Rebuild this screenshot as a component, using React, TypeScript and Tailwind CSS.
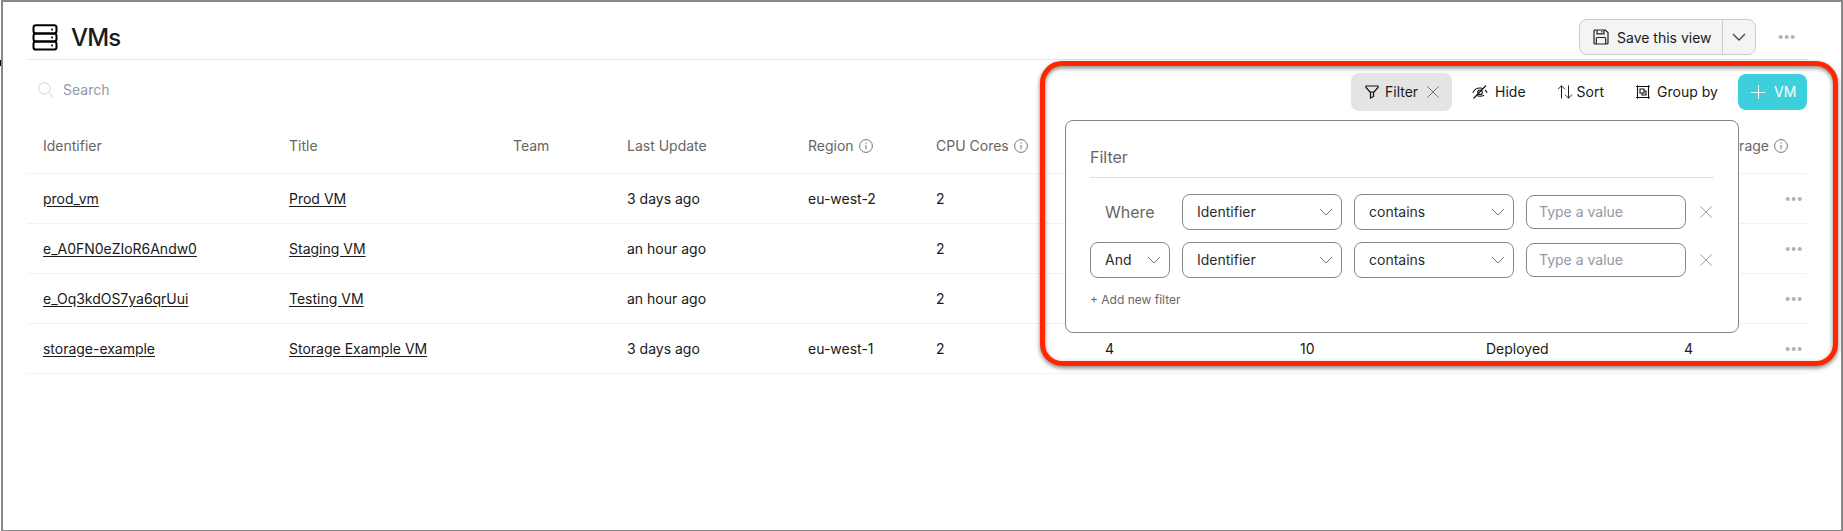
import React from "react";

const font = "font-['Inter',sans-serif]";

const rows = [
  { id: "prod_vm", title: "Prod VM", updated: "3 days ago", region: "eu-west-2", cpu: "2", extra: ["", "", "", ""] },
  { id: "e_A0FN0eZIoR6Andw0", title: "Staging VM", updated: "an hour ago", region: "", cpu: "2", extra: ["", "", "", ""] },
  { id: "e_Oq3kdOS7ya6qrUui", title: "Testing VM", updated: "an hour ago", region: "", cpu: "2", extra: ["", "", "", ""] },
  { id: "storage-example", title: "Storage Example VM", updated: "3 days ago", region: "eu-west-1", cpu: "2", extra: ["4", "10", "Deployed", "4"] },
];

const grid =
  "grid grid-cols-[246px_224px_114px_181px_128px_169px_195px_186px_198px_139px] items-center";

function Dots() {
  return (
    <svg width="18" height="6" viewBox="0 0 18 6" fill="#b3b3b3">
      <circle cx="2.700" cy="3" r="2.100" />
      <circle cx="8.700" cy="3" r="2.100" />
      <circle cx="14.700" cy="3" r="2.100" />
    </svg>
  );
}

function Info() {
  return (
    <svg width="14" height="14" viewBox="0 0 14 14" fill="none" stroke="#777" strokeWidth="1">
      <circle cx="7" cy="7" r="6.4" />
      <path d="M7 6v4.300M7 3.600v1.200" />
    </svg>
  );
}

function Chevron({ color = "#777", w = "1" }: { color?: string; w?: string }) {
  return (
    <svg width="14" height="8" viewBox="0 0 14 8" fill="none" stroke={color} strokeWidth={w}>
      <path d="M1 1l6 6 6-6" />
    </svg>
  );
}

function Cross({ color = "#999" }: { color?: string }) {
  return (
    <svg width="12" height="12" viewBox="0 0 12 12" fill="none" stroke={color} strokeWidth="1">
      <path d="M.4.4l11.2 11.2M11.6.4L.4 11.6" />
    </svg>
  );
}

function Select({ label, width }: { label: string; width: string }) {
  return (
    <div className={`${width} flex h-9 items-center justify-between rounded-lg border border-[#858585] bg-white pl-[14px] pr-2 text-[14px] text-[#2b2b2b]`}>
      {label}
      <Chevron />
    </div>
  );
}

function ValueInput() {
  return (
    <div className="flex h-[34px] w-40 items-center rounded-lg border border-[#858585] bg-white pl-3 text-[14px] text-[#9299a8]">
      Type a value
    </div>
  );
}

export default function App() {
  return (
    <div className={`${font} relative h-[531px] w-[1843px] overflow-hidden bg-white text-[14px] leading-5 text-[#1a1a1a]`}>
      <div className="ml-px h-[531px] border-2 border-b border-[#888] pl-6 pr-[34px]">
        <header className="flex h-[58px] items-center border-b border-[#e4e4e4] pt-4">
          <svg className="-mt-[3px] ml-[5px]" width="26" height="27" viewBox="0 0 26 27" fill="none" stroke="#000" strokeWidth="2">
            <rect x="1.500" y="1.300" width="23" height="8.100" rx="2.400" />
            <rect x="1.500" y="9.400" width="23" height="8.100" rx="2.400" />
            <rect x="1.500" y="17.500" width="23" height="8.100" rx="2.400" />
            <g fill="#000" stroke="none">
              <circle cx="20" cy="5.600" r="1" />
              <circle cx="20" cy="13.600" r="1" />
              <circle cx="20" cy="21.600" r="1" />
            </g>
          </svg>
          <h1 className="-mt-px ml-[13px] text-[24px] font-medium leading-8 tracking-[-0.8px]">VMs</h1>
          <div className="-mt-[3px] ml-auto mr-[11px] flex items-center gap-[22px]">
            <div className="flex h-9 w-[177px] rounded-lg border border-[#ccc] bg-[#f4f4f4]">
              <div className="flex w-[143px] items-center gap-2 border-r border-[#ccc] pl-[13px]">
                <svg width="16" height="16" viewBox="0 0 16 16" fill="none" stroke="#222" strokeWidth="1.200">
                  <path d="M2 1h10.200L15 3.600V14q0 1-1 1H2q-1 0-1-1V2q0-1 1-1z" />
                  <path d="M4 1v3.800h7V1M8.800 2v1.500M3.300 15V9.500q0-1 1-1h7.400q1 0 1 1V15" />
                </svg>
                <span className="pt-px">Save this view</span>
              </div>
              <div className="flex grow items-center justify-center">
                <Chevron color="#444" w="1.3" />
              </div>
            </div>
            <Dots />
          </div>
        </header>

        <div className="flex h-16 items-center">
          <svg className="-mt-1 ml-[11px]" width="16" height="16" viewBox="0 0 16 16" fill="none" stroke="#d4d4d4" strokeWidth="1">
            <circle cx="6.400" cy="6.400" r="5.700" />
            <path d="M10.500 10.500l4.800 4.800" />
          </svg>
          <span className="-mt-1 ml-[9px] text-[#9299a8]">Search</span>
          <div className="ml-auto flex items-center">
            <div className="flex h-[38px] w-[101px] items-center rounded-lg bg-[#e4e4e4] pl-[14px]">
              <svg width="14" height="14" viewBox="0 0 14 14" fill="none" stroke="#111" strokeWidth="1.200">
                <path d="M1 1h12v1.500L8.500 7.500v4L5.500 13V7.500L1 2.500zM5 7h4" />
              </svg>
              <span className="ml-[6px] mr-[9px]">Filter</span>
              <Cross color="#777" />
            </div>
            <svg className="ml-5" width="16" height="14" viewBox="0 0 16 14" fill="none" stroke="#111" strokeWidth="1.100">
              <path d="M.8 7.800Q3 3 8 3q2 0 3.500.8M13 5Q14.500 6.300 15.200 7.800M4.500 10.300Q6 11.300 8 11.300q2.200 0 4-1M1.500 13.500L14 .5" />
              <circle cx="8" cy="7.300" r="2.300" />
            </svg>
            <span className="ml-[7px]">Hide</span>
            <svg className="ml-8" width="15" height="14" viewBox="0 0 15 14" fill="none" stroke="#222" strokeWidth="1">
              <path d="M3.500 13.500V.8M0 4.300L3.500.8 7 4.300M10.500.5v12.700M7 9.700l3.500 3.500L14 9.700" />
            </svg>
            <span className="ml-[4px]">Sort</span>
            <svg className="ml-8" width="14" height="14" viewBox="0 0 14 14" fill="none" stroke="#111" strokeWidth="1.100">
              <path d="M1.500 1.500h11v11h-11zM4 4h4v4H4zM8 6h2v4H6V8" />
              <path d="M.2 1.500h1.300V.2M13.800 1.500h-1.300V.2M.2 12.500h1.300v1.300M13.800 12.500h-1.300v1.300" />
            </svg>
            <span className="ml-[7px] mr-[21px] w-[60px] whitespace-nowrap">Group by</span>
            <div className="flex h-9 w-[69px] items-center gap-[9px] rounded-lg bg-[#3ecfdd] pl-[13px] text-white">
              <svg width="14" height="14" viewBox="0 0 14 14" stroke="white" strokeWidth="1">
                <path d="M7.500 0v14M0 7.500h14" />
              </svg>
              VM
            </div>
          </div>
        </div>

        <div className={`${grid} h-[50px] border-b border-[#f1f1f1] pb-[5px] text-[#666]`}>
          <span className="pl-4">Identifier</span>
          <span className="pl-4">Title</span>
          <span className="pl-4">Team</span>
          <span className="pl-4">Last Update</span>
          <span className="flex items-center gap-[5px] pl-4">Region <Info /></span>
          <span className="flex items-center gap-[5px] pl-4">CPU Cores <Info /></span>
          <span />
          <span />
          <span />
          <span className="flex items-center justify-end gap-[5px] pr-[19px]">Storage <Info /></span>
        </div>
        {rows.map((r) => (
          <div key={r.id} className={`${grid} h-[50px] border-b border-[#f1f1f1]`}>
            <span className="pl-4 tracking-[-0.02px] underline underline-offset-2">{r.id}</span>
            <span className="pl-4 underline underline-offset-2">{r.title}</span>
            <span />
            <span className="pl-4">{r.updated}</span>
            <span className="pl-4">{r.region}</span>
            <span className="pl-4">{r.cpu}</span>
            <span className="pl-4">{r.extra[0]}</span>
            <span className="pl-4">{r.extra[1]}</span>
            <span className="pl-4">{r.extra[2]}</span>
            <span className="flex items-center justify-between pl-4 pr-[4px]">
              <span>{r.extra[3]}</span>
              <Dots />
            </span>
          </div>
        ))}
      </div>

      <div className="absolute left-0 top-[60px] h-[6px] w-px bg-black" />

      <div className="absolute left-[1065px] top-[120px] h-[213px] w-[674px] rounded-lg border border-[#858585] bg-white px-6 pt-6">
        <div className="flex h-[33px] items-start border-b border-[#e0e0e0] text-[16px] leading-6 text-[#666]">Filter</div>
        <div className="mt-4 flex flex-col gap-3">
          <div className="flex h-9 items-center gap-3">
            <span className="w-20 pl-[15px] text-[16px] text-[#666]">Where</span>
            <Select label="Identifier" width="w-40" />
            <Select label="contains" width="w-40" />
            <ValueInput />
            <span className="ml-[2px]"><Cross /></span>
          </div>
          <div className="flex h-9 items-center gap-3">
            <Select label="And" width="w-20" />
            <Select label="Identifier" width="w-40" />
            <Select label="contains" width="w-40" />
            <ValueInput />
            <span className="ml-[2px]"><Cross /></span>
          </div>
        </div>
        <div className="mt-3 text-[12px] text-[#666]">+ Add new filter</div>
      </div>

      <div className="absolute left-[1040px] top-[61px] h-[305px] w-[798px] rounded-[22px] border-[5px] border-[#ff2600] drop-shadow-[0_2px_2px_rgba(0,0,0,0.5)]" />
    </div>
  );
}
